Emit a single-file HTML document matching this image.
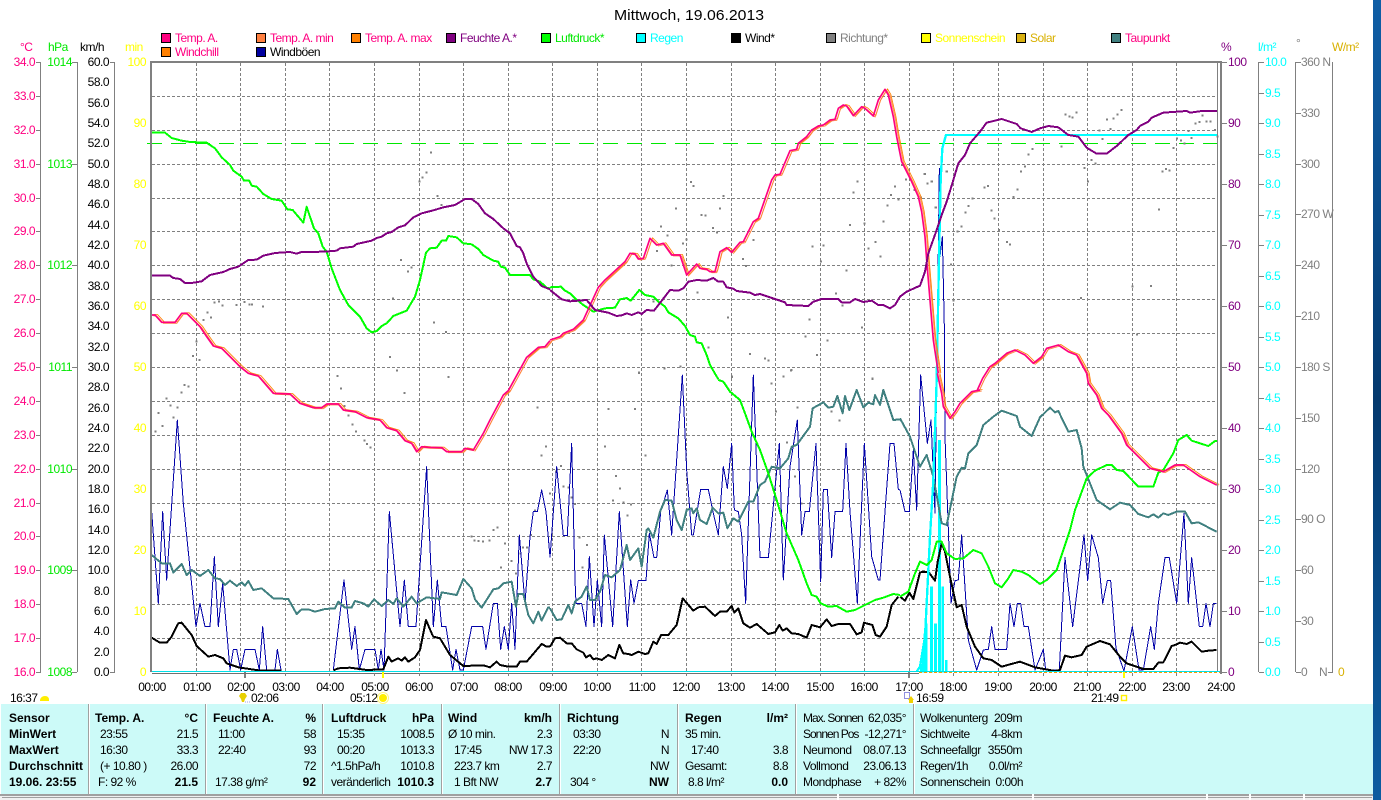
<!DOCTYPE html>
<html lang="de"><head><meta charset="utf-8"><title>Mittwoch, 19.06.2013</title>
<style>
html,body{margin:0;padding:0;background:#fff;width:1381px;height:800px;overflow:hidden}
svg{display:block}
text{font-family:"Liberation Sans",sans-serif;font-size:12px;letter-spacing:-.5px;white-space:pre}
.e{text-anchor:end}
.m{text-anchor:middle}
.b{font-weight:bold;letter-spacing:0}
.n{letter-spacing:-1px}
.l polyline,.l path{fill:none}
</style></head><body>
<svg width="1381" height="800" viewBox="0 0 1381 800" xmlns="http://www.w3.org/2000/svg">
<defs>
<linearGradient id="bl" x1="0" y1="0" x2="0" y2="1"><stop offset="0" stop-color="#0f5ea6"/><stop offset=".5" stop-color="#04396e"/><stop offset="1" stop-color="#0c5ca0"/></linearGradient>
<g id="t" fill="none">
<polyline transform="translate(150,120) scale(.33333)" points="5,585 15,585 35,607 75,607 95,580 110,580 150,620 170,650 190,678 215,685 270,740 295,760 325,768 370,820 420,822 450,850 490,863 515,863 530,852 565,852 580,870 615,875 650,893 690,900"/>
<polyline transform="translate(150,380) scale(.33333)" points="690,120 710,143 740,152 765,182 785,190 800,215 815,200 835,202 875,203 890,215 935,215 945,205 970,210 1000,160"/>
<polyline transform="translate(150,120) scale(.33333)" points="1000,940 1020,900 1060,825 1075,812 1130,712 1165,682 1185,680 1200,662"/>
<polyline transform="translate(550,80) scale(.33333)" points="0,780 30,770 40,760 70,748 100,720 145,622 165,600 225,545 240,520 255,522 265,537 280,535 300,475 320,495 340,490 365,525 390,525 410,585 440,552 450,565 470,568 480,575 495,575 510,515 530,503 545,517 570,487 580,485 610,425 625,415 665,300 675,285 690,283 720,212 740,208 745,190 770,170 785,150 805,138 820,135 840,120 855,118 865,85 880,75 890,78 910,107 935,80 945,85 970,108 985,60 1005,28 1015,45 1030,110 1040,170 1055,245 1085,305 1105,350 1115,395 1125,470 1130,540 1140,660 1150,780 1165,880"/>
<polyline transform="translate(900,370) scale(.33333)" points="112,10 125,70 130,110 150,145 165,125 180,100 215,65 240,60"/>
<polyline transform="translate(900,80) scale(.33333)" points="232,930 248,895 270,860 285,850 320,820 345,810 375,825 400,850 425,830 440,805 475,795 505,815 530,825 560,880"/>
<polyline transform="translate(900,370) scale(.33333)" points="560,10 565,40 590,75 605,115 625,135 665,190 680,225 720,265 750,295 790,305 825,285 850,285 900,320 950,345"/>
</g>
</defs>

<!-- title -->
<text x="614" y="20" textLength="150" lengthAdjust="spacingAndGlyphs" style="font-size:15px;letter-spacing:0">Mittwoch, 19.06.2013</text>

<!-- legend -->
<g stroke="#000" stroke-width="1">
<rect x="161.5" y="33.5" width="9" height="9" fill="#ff0080"/>
<rect x="256.5" y="33.5" width="9" height="9" fill="#ff8040"/>
<rect x="351.5" y="33.5" width="9" height="9" fill="#ff8000"/>
<rect x="446.5" y="33.5" width="9" height="9" fill="#800080"/>
<rect x="541.5" y="33.5" width="9" height="9" fill="#00ff00"/>
<rect x="636.5" y="33.5" width="9" height="9" fill="#00ffff"/>
<rect x="731.5" y="33.5" width="9" height="9" fill="#000"/>
<rect x="826.5" y="33.5" width="9" height="9" fill="#808080"/>
<rect x="921.5" y="33.5" width="9" height="9" fill="#ffff00"/>
<rect x="1016.5" y="33.5" width="9" height="9" fill="#d8b010"/>
<rect x="1111.5" y="33.5" width="9" height="9" fill="#408080"/>
<rect x="161.5" y="47.5" width="9" height="9" fill="#ff8000"/>
<rect x="256.5" y="47.5" width="9" height="9" fill="#0000a0"/>
</g>
<g>
<text x="175" y="42" fill="#ff0080">Temp. A.</text>
<text x="270" y="42" fill="#ff0080">Temp. A. min</text>
<text x="365" y="42" fill="#ff0080">Temp. A. max</text>
<text x="460" y="42" fill="#800080">Feuchte A.*</text>
<text x="555" y="42" fill="#00e800">Luftdruck*</text>
<text x="650" y="42" fill="#00ffff">Regen</text>
<text x="745" y="42" fill="#000">Wind*</text>
<text x="840" y="42" fill="#808080">Richtung*</text>
<text x="935" y="42" fill="#ffff00">Sonnenschein</text>
<text x="1030" y="42" fill="#d8b000">Solar</text>
<text x="1125" y="42" fill="#ff0080">Taupunkt</text>
<text x="175" y="56" fill="#ff0080">Windchill</text>
<text x="270" y="56" fill="#000">Windböen</text>
</g>

<!-- axis titles -->
<text x="20" y="51" fill="#ff0080">°C</text>
<text x="48" y="51" fill="#00e800">hPa</text>
<text x="80" y="51">km/h</text>
<text x="125" y="51" fill="#ffff00">min</text>
<text x="1221" y="51" fill="#800080">%</text>
<text x="1258" y="51" fill="#00ffff">l/m²</text>
<text x="1296" y="47" fill="#808080">°</text>
<text x="1332" y="51" fill="#d8b000">W/m²</text>

<!-- axes -->
<path fill="none" stroke="#808080" d="M40.5 62V672M77.5 62V672M114.5 62V672M1258.5 62V672M1295.5 62V672M1332.5 62V672"/>
<path fill="none" stroke="#808080" d="M36 62.5h5M36 96.5h5M36 130.5h5M36 164.5h5M36 198.5h5M36 231.5h5M36 265.5h5M36 299.5h5M36 333.5h5M36 367.5h5M36 401.5h5M36 435.5h5M36 469.5h5M36 503.5h5M36 536.5h5M36 570.5h5M36 604.5h5M36 638.5h5M36 672.5h5
M72 62.5h5M72 164.5h5M72 265.5h5M72 367.5h5M72 469.5h5M72 570.5h5M72 672.5h5M110 62.5h5M110 672.5h5
M1222 62.5h5M1222 123.5h5M1222 184.5h5M1222 245.5h5M1222 306.5h5M1222 367.5h5M1222 428.5h5M1222 489.5h5M1222 550.5h5M1222 611.5h5M1222 672.5h5
M1259 62.5h5M1259 93.5h5M1259 123.5h5M1259 154.5h5M1259 184.5h5M1259 215.5h5M1259 245.5h5M1259 276.5h5M1259 306.5h5M1259 337.5h5M1259 367.5h5M1259 398.5h5M1259 428.5h5M1259 459.5h5M1259 489.5h5M1259 520.5h5M1259 550.5h5M1259 581.5h5M1259 611.5h5M1259 642.5h5M1259 672.5h5
M1296 62.5h5M1296 113.5h5M1296 164.5h5M1296 214.5h5M1296 265.5h5M1296 316.5h5M1296 367.5h5M1296 418.5h5M1296 469.5h5M1296 519.5h5M1296 570.5h5M1296 621.5h5M1296 672.5h5M1328 672.5h5"/>

<g fill="#ff0080">
<text class="e" x="35" y="66">34.0</text><text class="e" x="35" y="100">33.0</text><text class="e" x="35" y="134">32.0</text><text class="e" x="35" y="168">31.0</text><text class="e" x="35" y="202">30.0</text><text class="e" x="35" y="235">29.0</text><text class="e" x="35" y="269">28.0</text><text class="e" x="35" y="303">27.0</text><text class="e" x="35" y="337">26.0</text><text class="e" x="35" y="371">25.0</text><text class="e" x="35" y="405">24.0</text><text class="e" x="35" y="439">23.0</text><text class="e" x="35" y="473">22.0</text><text class="e" x="35" y="507">21.0</text><text class="e" x="35" y="540">20.0</text><text class="e" x="35" y="574">19.0</text><text class="e" x="35" y="608">18.0</text><text class="e" x="35" y="642">17.0</text><text class="e" x="35" y="676">16.0</text>
</g>
<g fill="#00e800">
<text class="e" x="72" y="66">1014</text><text class="e" x="72" y="168">1013</text><text class="e" x="72" y="269">1012</text><text class="e" x="72" y="371">1011</text><text class="e" x="72" y="473">1010</text><text class="e" x="72" y="574">1009</text><text class="e" x="72" y="676">1008</text>
</g>
<g fill="#000">
<text class="e" x="109" y="66">60.0</text><text class="e" x="109" y="86">58.0</text><text class="e" x="109" y="107">56.0</text><text class="e" x="109" y="127">54.0</text><text class="e" x="109" y="147">52.0</text><text class="e" x="109" y="168">50.0</text><text class="e" x="109" y="188">48.0</text><text class="e" x="109" y="208">46.0</text><text class="e" x="109" y="229">44.0</text><text class="e" x="109" y="249">42.0</text><text class="e" x="109" y="269">40.0</text><text class="e" x="109" y="290">38.0</text><text class="e" x="109" y="310">36.0</text><text class="e" x="109" y="330">34.0</text><text class="e" x="109" y="351">32.0</text><text class="e" x="109" y="371">30.0</text><text class="e" x="109" y="391">28.0</text><text class="e" x="109" y="412">26.0</text><text class="e" x="109" y="432">24.0</text><text class="e" x="109" y="452">22.0</text><text class="e" x="109" y="473">20.0</text><text class="e" x="109" y="493">18.0</text><text class="e" x="109" y="513">16.0</text><text class="e" x="109" y="534">14.0</text><text class="e" x="109" y="554">12.0</text><text class="e" x="109" y="574">10.0</text><text class="e" x="109" y="595">8.0</text><text class="e" x="109" y="615">6.0</text><text class="e" x="109" y="635">4.0</text><text class="e" x="109" y="656">2.0</text><text class="e" x="109" y="676">0.0</text>
</g>
<g fill="#ffff00">
<text class="e" x="146" y="66">100</text><text class="e" x="146" y="127">90</text><text class="e" x="146" y="188">80</text><text class="e" x="146" y="249">70</text><text class="e" x="146" y="310">60</text><text class="e" x="146" y="371">50</text><text class="e" x="146" y="432">40</text><text class="e" x="146" y="493">30</text><text class="e" x="146" y="554">20</text><text class="e" x="146" y="615">10</text><text class="e" x="146" y="676">0</text>
</g>
<g fill="#800080">
<text x="1228" y="66">100</text><text x="1228" y="127">90</text><text x="1228" y="188">80</text><text x="1228" y="249">70</text><text x="1228" y="310">60</text><text x="1228" y="371">50</text><text x="1228" y="432">40</text><text x="1228" y="493">30</text><text x="1228" y="554">20</text><text x="1228" y="615">10</text><text x="1228" y="676">0</text>
</g>
<g fill="#00ffff">
<text x="1265" y="66">10.0</text><text x="1265" y="97">9.5</text><text x="1265" y="127">9.0</text><text x="1265" y="158">8.5</text><text x="1265" y="188">8.0</text><text x="1265" y="219">7.5</text><text x="1265" y="249">7.0</text><text x="1265" y="280">6.5</text><text x="1265" y="310">6.0</text><text x="1265" y="341">5.5</text><text x="1265" y="371">5.0</text><text x="1265" y="402">4.5</text><text x="1265" y="432">4.0</text><text x="1265" y="463">3.5</text><text x="1265" y="493">3.0</text><text x="1265" y="524">2.5</text><text x="1265" y="554">2.0</text><text x="1265" y="585">1.5</text><text x="1265" y="615">1.0</text><text x="1265" y="646">0.5</text><text x="1265" y="676">0.0</text>
</g>
<g fill="#808080">
<text x="1301" y="66">360 N</text><text x="1301" y="117">330</text><text x="1301" y="168">300</text><text x="1301" y="218">270 W</text><text x="1301" y="269">240</text><text x="1301" y="320">210</text><text x="1301" y="371">180 S</text><text x="1301" y="422">150</text><text x="1301" y="473">120</text><text x="1301" y="523">90 O</text><text x="1301" y="574">60</text><text x="1301" y="625">30</text><text x="1301" y="676">0</text><text x="1319" y="676">N</text>
</g>
<text x="1338" y="676" fill="#d8b000">0</text>

<!-- grid -->
<g stroke="#808080" stroke-width="1" stroke-dasharray="3 2" fill="none" shape-rendering="crispEdges">
<path d="M152 96.5H1217M152 130.5H1217M152 164.5H1217M152 198.5H1217M152 231.5H1217M152 265.5H1217M152 299.5H1217M152 333.5H1217M152 367.5H1217M152 401.5H1217M152 435.5H1217M152 469.5H1217M152 503.5H1217M152 536.5H1217M152 570.5H1217M152 604.5H1217M152 638.5H1217"/>
<path d="M196.5 63V672M240.5 63V672M285.5 63V672M329.5 63V672M374.5 63V672M419.5 63V672M463.5 63V672M508.5 63V672M552.5 63V672M597.5 63V672M641.5 63V672M686.5 63V672M731.5 63V672M775.5 63V672M820.5 63V672M864.5 63V672M909.5 63V672M953.5 63V672M998.5 63V672M1043.5 63V672M1087.5 63V672M1132.5 63V672M1176.5 63V672"/>
</g>
<path d="M147 143.5H1217" stroke="#00e800" stroke-width="1" stroke-dasharray="15 9" fill="none" shape-rendering="crispEdges"/>

<!-- direction dots -->
<g fill="none" stroke="#808080" stroke-width="6" shape-rendering="crispEdges">
<path transform="translate(150,120) scale(.33333)" d="M840 98h6M827 158h6M815 173h6M806 185h6M860 228h6M872 255h6M750 420h6M782 443h6M771 455h6M726 535h6M190 548h6M204 545h6M215 557h6M257 555h6M281 546h6M295 554h6M303 554h6M336 560h6M170 578h6M158 600h6M180 593h6M849 608h6M885 636h6M137 665h6M126 708h6M146 720h6M717 711h6M738 752h6M560 768h6M893 771h6M101 795h6M113 800h6M92 818h6M570 806h6M761 819h6M47 836h6M59 857h6M80 863h6M23 879h6M68 893h6M1160 863h6M580 858h6M593 887h6"/>
<path transform="translate(150,380) scale(.33333)" d="M13 155h6M35 138h6M640 182h6M648 192h6M658 202h6M605 133h6M615 155h6M1185 200h6M1172 227h6M1197 340h6M1152 392h6M1140 465h6M1040 443h6M1028 450h6M1016 482h6M996 485h6M982 483h6M970 482h6M962 470h6M1062 490h6M1108 520h6M1116 503h6M1128 503h6M1082 543h6M1050 563h6M1095 580h6"/>
<path transform="translate(550,370) scale(.33333)" d="M264 8h6M722 0h6M965 27h6M543 20h6M662 40h6M173 117h6M252 117h6M675 125h6M740 113h6M842 125h6M865 152h6M162 230h6M284 257h6M708 218h6M30 288h6M15 305h6M195 318h6M732 320h6M38 350h6M52 353h6M207 355h6M687 348h6M186 392h6M62 383h6M72 402h6M240 403h6M218 397h6M752 400h6M230 437h6M85 502h6M108 525h6M95 593h6"/>
<path transform="translate(550,80) scale(.33333)" d="M420 306h6M428 318h6M518 348h6M375 386h6M507 386h6M452 405h6M464 407h6M486 444h6M498 457h6M330 440h6M350 467h6M396 491h6M407 478h6M318 513h6M576 537h6M585 558h6M608 480h6M785 500h6M817 497h6M953 506h6M974 486h6M988 530h6M897 435h6M940 430h6M998 425h6M1010 377h6M1042 358h6M1020 345h6M1032 320h6M908 338h6M920 305h6M810 545h6M887 572h6M1053 255h6M1122 282h6M1143 305h6M1130 311h6M1187 275h6M1090 330h6M1110 352h6M1155 383h6M1167 328h6M855 641h6M875 677h6M440 638h6M308 665h6M362 557h6M531 713h6M776 719h6M933 743h6M764 770h6M830 782h6M272 749h6M597 822h6M798 825h6M642 836h6M653 842h6M473 803h6M341 866h6M388 860h6M264 879h6M543 891h6M698 890h6M720 872h6M965 896h6"/>
<path transform="translate(900,80) scale(.33333)" d="M494 104h6M505 110h6M515 113h6M527 98h6M662 90h6M650 104h6M638 116h6M618 119h6M629 147h6M595 152h6M605 177h6M482 200h6M395 207h6M383 224h6M372 260h6M360 275h6M138 275h6M71 282h6M92 305h6M80 311h6M15 298h6M40 330h6M60 352h6M117 330h6M104 383h6M250 323h6M261 318h6M350 329h6M338 351h6M215 356h6M203 378h6M194 398h6M182 440h6M170 455h6M272 392h6M281 416h6M294 450h6M318 486h6M327 494h6M150 554h6M158 661h6M112 630h6M540 654h6M695 619h6M750 618h6M708 763h6M774 389h6M785 275h6M795 267h6M806 272h6M818 204h6M828 175h6M840 181h6M851 191h6M863 153h6M872 174h6M884 131h6M895 126h6M905 107h6M917 125h6M929 125h6M942 150h6M950 170h6M572 240h6M584 250h6M551 264h6M561 305h6"/>
</g>

<!-- rain bars -->
<g transform="translate(900,370) scale(.33333)" fill="#00ffff" shape-rendering="crispEdges">
<rect x="60" y="880" width="6" height="27"/><rect x="66" y="840" width="5" height="67"/><rect x="71" y="790" width="5" height="117"/><rect x="76" y="760" width="6" height="147"/><rect x="90" y="650" width="9" height="257"/><rect x="102" y="760" width="9" height="147"/><rect x="114" y="210" width="9" height="697"/><rect x="124" y="650" width="8" height="257"/><rect x="135" y="870" width="8" height="37"/>
</g>

<!-- gusts -->
<g class="l" stroke="#0000a8" stroke-width="3" shape-rendering="crispEdges" stroke-linejoin="round">
<polyline transform="translate(150,380) scale(.33333)" points="5,395 25,670 38,395 50,600 82,120 100,370 138,740 150,670 165,740 180,740 193,530 205,740 218,610 240,870 250,808 260,808 272,870 285,808 315,808 328,870 338,740 350,870 375,870 382,808 393,870"/>
<polyline transform="translate(150,380) scale(.33333)" points="550,870 582,600 605,808 615,740 628,870 645,808 675,808 685,870 693,808 702,870 718,395 750,740 763,600 775,740 798,740 830,260 850,740 862,600 875,740 888,740 908,870 918,808 930,870 940,870 965,740 998,740 1008,808 1030,670 1042,670 1052,808 1063,740 1075,808 1085,670 1095,808 1108,465 1125,670 1140,470 1150,395 1162,395 1175,330 1188,395 1200,530"/>
<polyline transform="translate(550,370) scale(.33333)" points="0,563 20,290 40,497 52,497 65,220 75,630 78,700 95,700 108,770 118,560 132,770 142,630 155,770 163,495 188,770 208,425 232,770 242,630 252,700 265,632 288,632 298,490 312,563 320,563 332,425 352,360 365,495 397,15 410,300 425,495 430,495 452,358 475,358 490,430 505,495 520,290 532,355 545,220 553,420 565,425 575,495 587,700 610,15 630,563 655,563 688,220 700,630 720,290 742,150 755,495 765,425 778,425 798,220 812,635 820,358 832,358 845,563 855,425 878,425 888,220 900,425 922,700 943,220 965,560 985,630 990,630 1020,220 1032,220 1045,358 1050,360"/>
<polyline transform="translate(900,370) scale(.33333)" points="0,360 15,425 28,425 40,240 50,420 62,15 82,220 93,150 105,430 118,-605 120,-340 127,-400 133,-130 135,200 153,700 165,632 175,630 185,495 205,810 230,900 250,840 265,838 275,770 285,838 320,838 330,700 342,770 352,700 362,700 372,770 385,770 405,900 430,838 437,900 478,900 495,563 518,770 552,495 563,632 575,495 595,563 608,700 622,632 632,632 648,835 672,903 697,770 717,900 730,900 752,770 763,838 775,700 795,563 808,563 830,700 852,430 865,700 875,563 898,770 908,770 918,700 930,770 940,700 950,700"/>
</g>

<!-- wind -->
<g class="l" stroke="#000" stroke-width="6" stroke-linejoin="round" shape-rendering="crispEdges">
<polyline transform="translate(150,380) scale(.33333)" points="5,773 30,788 50,788 65,770 85,730 95,728 125,765 140,798 175,830 195,825 220,835 230,850 265,862 325,871 395,871"/>
<polyline transform="translate(150,380) scale(.33333)" points="550,871 565,865 600,863 650,870 700,868 715,830 725,845 745,835 755,842 765,832 775,845 795,832 810,810 828,720 845,760 850,770 870,775 900,825 940,858 1000,856 1020,862 1040,845 1050,855 1075,860 1100,860 1110,845 1130,845 1175,792 1190,800 1200,800"/>
<polyline transform="translate(550,370) scale(.33333)" points="0,830 15,805 30,803 50,820 65,820 80,838 100,848 108,862 120,855 130,868 140,865 155,870 175,855 195,865 208,825 220,850 235,852 245,855 265,845 285,852 295,850 310,815 320,822 333,795 355,795 380,765 398,685 430,722 445,712 465,710 495,738 510,725 530,725 545,708 553,728 565,715 580,760 600,773 620,762 655,792 675,787 688,765 698,782 710,775 725,790 745,792 770,803 785,765 810,772 830,748 845,768 865,762 900,762 920,793 935,787 942,758 967,765 977,795 990,800 1010,770 1025,705 1045,680"/>
<polyline transform="translate(900,370) scale(.33333)" points="0,680 15,692 28,668 40,687 60,607 85,605 105,632 113,575 125,520 135,545 150,620 170,712 185,705 200,770 225,830 250,865 275,870 305,890 330,883 360,875 405,892 465,903 480,900 495,857 515,862 545,855 560,830 600,813 630,823 660,860 680,880 730,897 760,897 775,878 790,877 815,828 825,825 840,818 860,822 875,815 905,845 925,842 950,840"/>
</g>

<!-- dew point -->
<g class="l" stroke="#408080" stroke-width="6" stroke-linejoin="round" shape-rendering="crispEdges">
<polyline transform="translate(150,380) scale(.33333)" points="5,525 35,550 60,550 70,578 95,552 110,585 125,570 150,588 175,570 195,595 210,597 225,615 240,602 260,618 275,607 285,617 295,603 310,630 335,625 370,655 415,657 440,702 455,688 475,688 495,695 525,687 555,685 565,665 585,683 605,683 615,663 640,670 655,680 672,658 695,678 715,660 730,672 740,655 760,680 785,650 800,670 830,652 870,657 875,637 920,645 940,597 965,625 975,658 995,683 1030,628 1045,625 1060,610 1085,605 1098,680 1105,642 1120,642 1135,705 1150,730 1165,695 1175,722 1195,682 1200,682"/>
<polyline transform="translate(550,370) scale(.33333)" points="0,715 20,750 35,748 55,705 65,730 75,695 95,680 110,650 120,690 135,690 150,665 165,615 185,622 210,600 230,525 240,570 265,535 275,590 290,480 295,475 310,503 330,425 345,390 365,392 380,450 395,480 410,420 425,415 430,430 440,415 450,450 470,462 488,413 505,430 520,428 532,475 550,445 565,455 595,395 610,395 630,345 645,335 665,290 690,295 715,265 725,230 740,225 780,170 788,115 820,97 835,113 850,110 862,78 878,130 885,78 898,120 920,60 940,112 955,98 970,103 975,75 990,105 1000,60 1030,150 1050,148"/>
<polyline transform="translate(900,370) scale(.33333)" points="0,145 30,200 60,290 80,255 100,320 125,460 140,465 170,320 185,293 195,295 205,250 230,225 250,165 280,140 305,122 350,138 360,170 395,198 420,142 450,113 465,127 475,123 505,185 530,180 545,235 550,290 590,390 630,418 660,398 690,405 715,432 745,442 760,433 775,443 790,430 805,435 830,425 855,425 875,460 895,457 950,485"/>
</g>

<!-- cumulative rain -->
<g class="l" stroke="#00ffff" stroke-width="7" stroke-linejoin="round" shape-rendering="crispEdges">
<polyline transform="translate(900,370) scale(.33333)" points="50,905 60,890 75,800 90,500 100,330 110,30"/>
<polyline transform="translate(900,80) scale(.33333)" points="110,900 115,640 122,300 127,205 138,165 952,165"/>
</g>

<!-- pressure -->
<g class="l" stroke="#00ff00" stroke-width="6" stroke-linejoin="round" shape-rendering="crispEdges">
<polyline transform="translate(150,120) scale(.33333)" points="5,38 45,38 65,54 95,62 120,66 170,68 195,85 215,112 240,135 250,152 275,170 282,182 298,182 305,197 320,200 340,222 365,237 395,242 412,268 428,270 445,290 460,308 470,260 480,290 492,325 505,340 518,380 530,395 545,445 570,510 595,555 630,590 650,625 665,637 680,633 695,618 710,610 730,588 770,572 795,530 810,480 828,398 840,385 860,383 875,362 888,362 895,348 920,352 940,370 965,373 985,387 1000,405 1030,422 1045,425 1052,440 1065,443 1080,465 1140,465 1150,478 1170,485 1190,503 1200,505"/>
<polyline transform="translate(550,80) scale(.33333)" points="0,622 33,620 45,632 60,640 75,655 100,675 130,695 165,685 195,683 210,658 230,654 242,662 268,630 285,645 310,650 325,665 345,680 355,697 385,715 405,738 420,765 435,770 440,787 455,790 470,825 480,855 505,898"/>
<polyline transform="translate(550,370) scale(.33333)" points="505,30 520,35 540,65 570,90 585,130 605,185 630,240 655,310 680,390 710,490 745,570 770,640 785,675 800,680 812,700 835,710 860,708 890,725 915,720 945,705 975,690 1000,683 1030,672 1050,675"/>
<polyline transform="translate(900,370) scale(.33333)" points="0,680 25,665 45,610 60,575 80,585 95,570 110,515 125,515 140,550 165,567 190,565 220,540 245,550 265,590 285,640 305,652 325,625 340,600 365,605 385,615 420,642 440,630 470,600 490,540 510,480 525,420 560,325 585,302 620,285 635,285 650,300 670,303 715,350 760,350 775,308 790,300 820,250 835,210 860,195 875,212 925,228 945,213 952,213"/>
</g>

<!-- temperature -->
<g stroke-linejoin="round">
<use href="#t" transform="translate(2.5,-.5)" stroke="#ff8000" stroke-width="2.6"/>
<use href="#t" transform="translate(1.8,1)" stroke="#ff8040" stroke-width="2.6"/>
<use href="#t" stroke="#ff0080" stroke-width="5"/>
</g>

<!-- humidity -->
<g class="l" stroke="#800080" stroke-width="6" stroke-linejoin="round" shape-rendering="crispEdges">
<polyline transform="translate(150,120) scale(.33333)" points="5,467 60,467 70,474 90,477 105,489 125,489 155,484 180,465 220,456 240,447 265,440 295,420 320,419 340,407 375,399 420,396 440,401 455,396 525,395 560,392 570,385 610,380 620,372 665,362 680,354 695,350 710,340 725,336 745,322 765,316 790,292 815,280 850,271 880,262 915,255 945,237 965,237 985,252 1005,280 1030,297 1060,325 1080,340 1100,378 1110,382 1120,400 1130,430 1150,470 1175,498 1200,508"/>
<polyline transform="translate(550,80) scale(.33333)" points="0,630 35,658 60,664 110,660 135,690 175,698 200,708 215,706 230,700 245,705 265,697 275,702 290,690 312,692 360,630 385,632 400,625 415,605 440,600 470,602 490,594 505,605 520,605 530,622 550,626 560,633 600,638 615,645 630,642 660,652 705,667 710,675 775,678 790,665 815,657 865,657 875,667 900,667 915,657 940,666 965,662 985,675 1000,675 1020,685 1035,675 1050,650"/>
<polyline transform="translate(900,80) scale(.33333)" points="0,650 20,635 60,617 75,575 85,520 110,450 125,405 140,365 157,310 175,250 195,225 210,190 240,155 260,128 305,117 350,132 362,145 395,156 420,145 445,138 475,142 505,165 535,170 560,203 590,221 620,221 650,198 685,165 710,150 720,138 745,125 755,113 790,98 860,93 870,98 905,93 952,93"/>
</g>

<!-- plot frame -->
<g fill="#808080" shape-rendering="crispEdges">
<rect x="150" y="62" width="2" height="610"/>
<rect x="150" y="61" width="1072" height="2"/>
<rect x="1217" y="62" width="1" height="610"/>
<rect x="1220" y="62" width="2" height="612"/>
<rect x="244" y="672" width="2" height="6"/>
<rect x="908" y="672" width="2" height="6"/>
</g>
<rect x="152" y="673" width="767" height="1" fill="#707070" shape-rendering="crispEdges"/>
<path d="M919 672.5H1220" stroke="#f0a000" stroke-dasharray="3 2" fill="none" shape-rendering="crispEdges"/>
<rect x="152" y="671" width="1068" height="1" fill="#00e0e8" shape-rendering="crispEdges"/>
<rect x="382" y="672" width="2" height="6" fill="#ffff00"/>
<rect x="1123" y="672" width="2" height="6" fill="#ffff00"/>
<!-- small ticks under the axis -->
<path fill="none" stroke="#808080" d="M196.5 673v3M285.5 673v3M329.5 673v3M374.5 673v3M419.5 673v3M463.5 673v3M508.5 673v3M552.5 673v3M597.5 673v3M641.5 673v3M686.5 673v3M731.5 673v3M775.5 673v3M820.5 673v3M864.5 673v3M953.5 673v3M998.5 673v3M1043.5 673v3M1087.5 673v3M1132.5 673v3M1176.5 673v3"/>

<!-- time axis -->
<g fill="#000">
<text class="m" x="152" y="691">00:00</text><text class="m" x="197" y="691">01:00</text><text class="m" x="241" y="691">02:00</text><text class="m" x="286" y="691">03:00</text><text class="m" x="330" y="691">04:00</text><text class="m" x="375" y="691">05:00</text><text class="m" x="419" y="691">06:00</text><text class="m" x="464" y="691">07:00</text><text class="m" x="508" y="691">08:00</text><text class="m" x="553" y="691">09:00</text><text class="m" x="597" y="691">10:00</text><text class="m" x="642" y="691">11:00</text><text class="m" x="686" y="691">12:00</text><text class="m" x="731" y="691">13:00</text><text class="m" x="775" y="691">14:00</text><text class="m" x="820" y="691">15:00</text><text class="m" x="864" y="691">16:00</text><text class="m" x="909" y="691">17:00</text><text class="m" x="953" y="691">18:00</text><text class="m" x="998" y="691">19:00</text><text class="m" x="1043" y="691">20:00</text><text class="m" x="1087" y="691">21:00</text><text class="m" x="1132" y="691">22:00</text><text class="m" x="1176" y="691">23:00</text><text class="m" x="1221" y="691">24:00</text>
<text x="10" y="702">16:37</text><text x="251" y="702">02:06</text><text x="350" y="702">05:12</text><text x="916" y="702">16:59</text><text x="1091" y="702">21:49</text>
</g>
<!-- sun / moon icons -->
<path d="M40 701v-1q1-4 5-4t4 4v1z" fill="#ffee00"/>
<path d="M241 693h4l2 3-2 3-1 3h-2l-1-3-2-3z" fill="#e8d000"/>
<path d="M245 702h6" stroke="#a0a0e0" stroke-dasharray="1 1" fill="none"/>
<circle cx="383" cy="698" r="4" fill="#ffee00"/><circle cx="383" cy="698" r="5.5" fill="none" stroke="#ffee00" stroke-opacity=".5"/>
<rect x="904.5" y="692.5" width="5" height="6" fill="none" stroke="#2020c0" stroke-dasharray="1 1"/>
<path d="M911 696l3 4h-1v3h-4v-3h-1z" fill="#f0d000"/>
<rect x="1121.5" y="695.5" width="5" height="5" fill="none" stroke="#ffee00" stroke-width="1.4"/>

<!-- info panel -->
<rect x="1" y="704" width="1372" height="90" fill="#ccfaf8"/>
<g fill="#a0a0a0" shape-rendering="crispEdges">
<rect x="88" y="704" width="1" height="90"/><rect x="205" y="704" width="1" height="90"/><rect x="322" y="704" width="1" height="90"/><rect x="441" y="704" width="1" height="90"/><rect x="559" y="704" width="1" height="90"/><rect x="677" y="704" width="1" height="90"/><rect x="795" y="704" width="1" height="90"/><rect x="913" y="704" width="1" height="90"/>
</g>
<g fill="#fff" shape-rendering="crispEdges">
<rect x="89" y="704" width="1" height="90"/><rect x="206" y="704" width="1" height="90"/><rect x="323" y="704" width="1" height="90"/><rect x="442" y="704" width="1" height="90"/><rect x="560" y="704" width="1" height="90"/><rect x="678" y="704" width="1" height="90"/><rect x="796" y="704" width="1" height="90"/><rect x="914" y="704" width="1" height="90"/>
</g>

<g fill="#000">
<!-- col 1 -->
<text class="b" x="9" y="722">Sensor</text><text class="b" x="9" y="738">MinWert</text><text class="b" x="9" y="754">MaxWert</text><text class="b" x="9" y="770">Durchschnitt</text><text class="b" x="9" y="786">19.06. 23:55</text>
<!-- col 2 -->
<text class="b" x="95" y="722">Temp. A.</text><text class="b e" x="198" y="722">°C</text>
<text x="100" y="738">23:55</text><text class="e" x="198" y="738">21.5</text>
<text x="100" y="754">16:30</text><text class="e" x="198" y="754">33.3</text>
<text x="100" y="770">(+ 10.80 )</text><text class="e" x="198" y="770">26.00</text>
<text x="98" y="786">F: 92 %</text><text class="b e" x="198" y="786">21.5</text>
<!-- col 3 -->
<text class="b" x="213" y="722">Feuchte A.</text><text class="b e" x="316" y="722">%</text>
<text x="218" y="738">11:00</text><text class="e" x="316" y="738">58</text>
<text x="218" y="754">22:40</text><text class="e" x="316" y="754">93</text>
<text class="e" x="316" y="770">72</text>
<text x="215" y="786">17.38 g/m²</text><text class="b e" x="316" y="786">92</text>
<!-- col 4 -->
<text class="b" x="331" y="722">Luftdruck</text><text class="b e" x="434" y="722">hPa</text>
<text x="337" y="738">15:35</text><text class="e" x="434" y="738">1008.5</text>
<text x="337" y="754">00:20</text><text class="e" x="434" y="754">1013.3</text>
<text x="331" y="770">^1.5hPa/h</text><text class="e" x="434" y="770">1010.8</text>
<text x="331" y="786">veränderlich</text><text class="b e" x="434" y="786">1010.3</text>
<!-- col 5 -->
<text class="b" x="448" y="722">Wind</text><text class="b e" x="552" y="722">km/h</text>
<text x="448" y="738">Ø 10 min.</text><text class="e" x="552" y="738">2.3</text>
<text x="454" y="754">17:45</text><text class="e" x="552" y="754">NW 17.3</text>
<text x="454" y="770">223.7 km</text><text class="e" x="552" y="770">2.7</text>
<text x="454" y="786">1 Bft NW</text><text class="b e" x="552" y="786">2.7</text>
<!-- col 6 -->
<text class="b" x="567" y="722">Richtung</text>
<text x="573" y="738">03:30</text><text class="e" x="669" y="738">N</text>
<text x="573" y="754">22:20</text><text class="e" x="669" y="754">N</text>
<text class="e" x="669" y="770">NW</text>
<text x="570" y="786">304 °</text><text class="b e" x="669" y="786">NW</text>
<!-- col 7 -->
<text class="b" x="685" y="722">Regen</text><text class="b e" x="788" y="722">l/m²</text>
<text x="685" y="738">35 min.</text>
<text x="691" y="754">17:40</text><text class="e" x="788" y="754">3.8</text>
<text x="685" y="770">Gesamt:</text><text class="e" x="788" y="770">8.8</text>
<text x="688" y="786">8.8 l/m²</text><text class="b e" x="788" y="786">0.0</text>
<!-- col 8 -->
<text class="n" x="803" y="722">Max. Sonnen</text><text class="e" x="906" y="722">62,035°</text>
<text class="n" x="803" y="738">Sonnen Pos</text><text class="e" x="906" y="738">-12,271°</text>
<text x="803" y="754">Neumond</text><text class="e" x="906" y="754">08.07.13</text>
<text x="803" y="770">Vollmond</text><text class="e" x="906" y="770">23.06.13</text>
<text x="803" y="786">Mondphase</text><text class="e" x="906" y="786">+ 82%</text>
<!-- col 9 -->
<text x="920" y="722">Wolkenunterg</text><text class="e" x="1022" y="722">209m</text>
<text x="920" y="738">Sichtweite</text><text class="e" x="1022" y="738">4-8km</text>
<text x="920" y="754">Schneefallgr</text><text class="e" x="1022" y="754">3550m</text>
<text x="920" y="770">Regen/1h</text><text class="e" x="1022" y="770">0.0l/m²</text>
<text x="920" y="786">Sonnenschein</text><text class="e" x="1023" y="786">0:00h</text>
</g>

<!-- status bar -->
<rect x="0" y="794" width="1373" height="6" fill="#f0f0f0"/>
<rect x="0" y="794" width="1373" height="2" fill="#a0a0a0" shape-rendering="crispEdges"/>
<g fill="#a0a0a0" shape-rendering="crispEdges"><rect x="2" y="797" width="835" height="1"/><rect x="839" y="797" width="193" height="1"/><rect x="1034" y="797" width="172" height="1"/><rect x="1208" y="797" width="41" height="1"/><rect x="1251" y="797" width="52" height="1"/><rect x="1305" y="797" width="67" height="1"/></g>
<g fill="#fff" shape-rendering="crispEdges"><rect x="837" y="794" width="2" height="6"/><rect x="1032" y="794" width="2" height="6"/><rect x="1206" y="794" width="2" height="6"/><rect x="1249" y="794" width="2" height="6"/><rect x="1303" y="794" width="2" height="6"/></g>

<!-- desktop strip -->
<rect x="1373" y="0" width="8" height="800" fill="url(#bl)"/>
</svg>
</body></html>
